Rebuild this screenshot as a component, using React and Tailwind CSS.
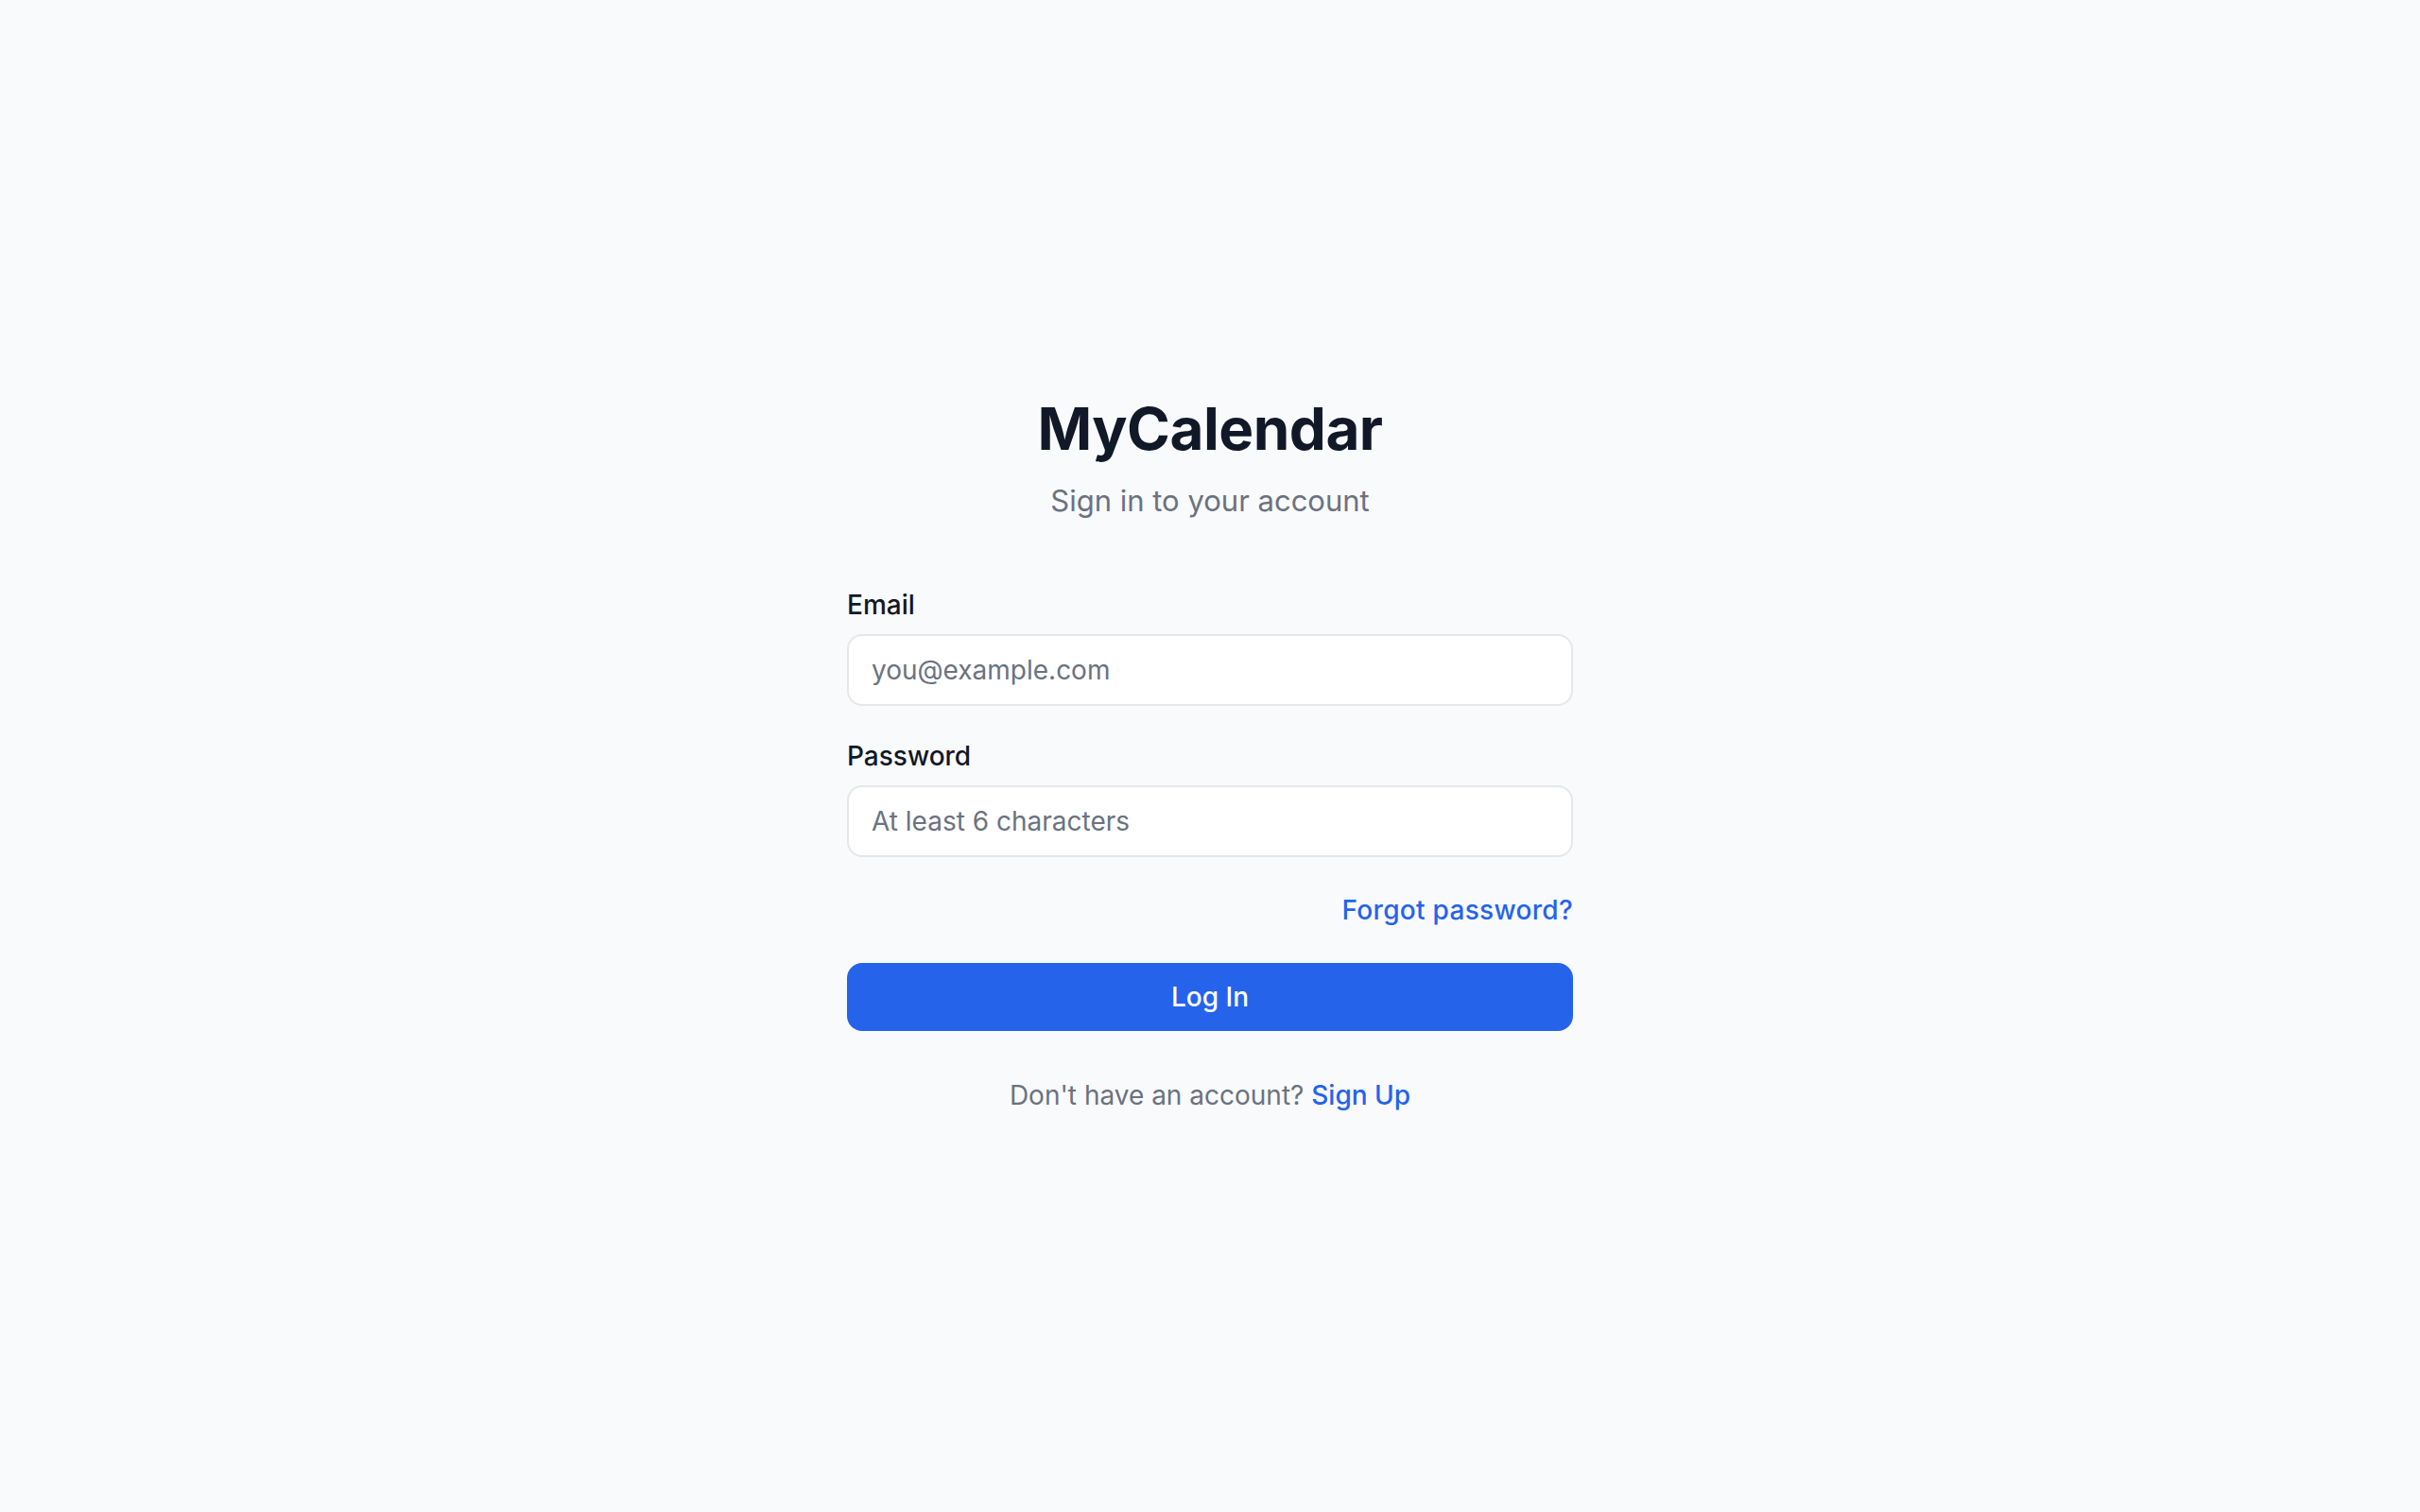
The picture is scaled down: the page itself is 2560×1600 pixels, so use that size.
import { useState } from "react";

export default function App() {
  const [email, setEmail] = useState("");
  const [password, setPassword] = useState("");

  return (
    <div
      className="flex min-h-screen items-center justify-center bg-[#f9fafb] text-[#111827]"
      style={{ fontFamily: "Inter, 'Noto Sans', sans-serif" }}
    >
      <div className="w-[768px] pb-[4px]">
        <div className="text-center">
          <h1 className="text-[62px] font-bold leading-[72px] tracking-[-0.5px] text-[#111827]">MyCalendar</h1>
          <p className="mt-[18px] text-[31px] leading-[44px] text-[#6b7280]">Sign in to your account</p>
        </div>

        <form className="mt-[68px]" onSubmit={(e) => e.preventDefault()}>
          <label className="block text-[28px] font-medium leading-[40px] text-[#111827]">Email</label>
          <input
            type="email"
            value={email}
            onChange={(e) => setEmail(e.target.value)}
            placeholder="you@example.com"
            className="mt-[11px] block h-[76px] w-full rounded-[16px] border-2 border-[#e5e7eb] bg-white px-[24px] text-[28px] text-[#111827] outline-none placeholder:text-[#6b7280]"
          />

          <label className="mt-[33px] block text-[28px] font-medium leading-[40px] text-[#111827]">Password</label>
          <input
            type="password"
            value={password}
            onChange={(e) => setPassword(e.target.value)}
            placeholder="At least 6 characters"
            className="mt-[11px] block h-[76px] w-full rounded-[16px] border-2 border-[#e5e7eb] bg-white px-[24px] text-[28px] text-[#111827] outline-none placeholder:text-[#6b7280]"
          />

          <div className="mt-[36px] flex justify-end">
            <a href="#" className="text-[28px] font-medium leading-[40px] tracking-[0.3px] text-[#2563eb]">
              Forgot password?
            </a>
          </div>

          <button
            type="submit"
            className="mt-[36px] flex h-[72px] w-full items-center justify-center rounded-[16px] bg-[#2563eb] text-[28px] font-medium text-white"
          >
            Log In
          </button>
        </form>

        <p className="mt-[48px] text-center text-[28px] leading-[40px] text-[#6b7280]">
          Don't have an account?{" "}
          <a href="#" className="font-medium text-[#2563eb]">
            Sign Up
          </a>
        </p>
      </div>
    </div>
  );
}
